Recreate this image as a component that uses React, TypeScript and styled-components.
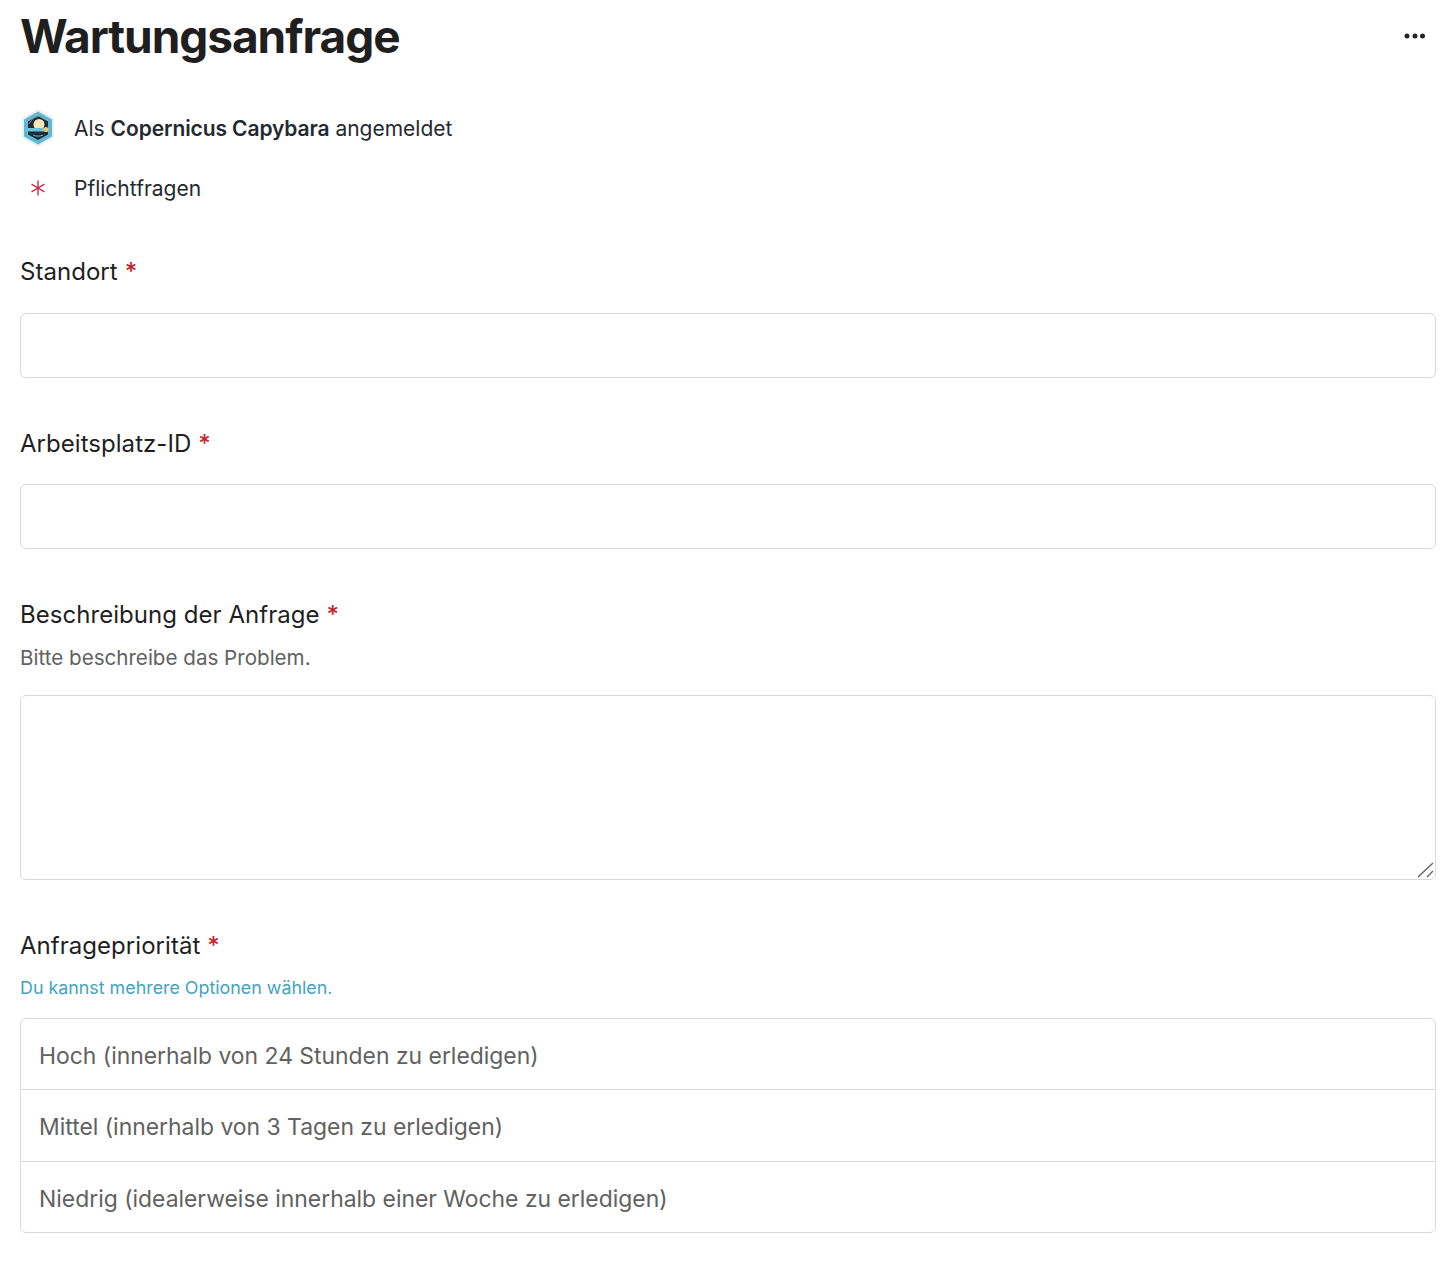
import React from "react";
import styled, { createGlobalStyle } from "styled-components";

const Global = createGlobalStyle`
  html, body { margin: 0; padding: 0; background: #fff; }
  body { font-family: Inter, "Liberation Sans", sans-serif; color: #1f1f1f; }
`;
const Page = styled.main`
  width: 1448px; height: 1264px; box-sizing: border-box; padding: 0 12px 0 20px; overflow: hidden;
`;
const Header = styled.header`
  display: flex; justify-content: space-between; height: 72px; align-items: center;
`;
const Title = styled.h1`
  margin: 0; font-size: 46px; line-height: 72px; font-weight: 700; letter-spacing: -1.05px; color: #1f1f1f;
`;
const More = styled.button`
  border: 0; background: none; padding: 0; margin-right: 10px; width: 22px; height: 22px; display: flex; align-items: center; justify-content: center;
`;
const Info = styled.div`
  display: flex; align-items: center; gap: 18px; height: 60px; font-size: 21px; color: #24292f;
`;
const InfoIcon = styled.span`
  width: 36px; display: flex; justify-content: center; align-items: center;
`;
const Bold = styled.b` font-weight: 600; letter-spacing: -0.1px; `;
const Meta = styled.div` margin-top: 26px; margin-bottom: 38px; `;
const Field = styled.section` margin-bottom: 50px; `;
const Label = styled.div<{ $gap: number }>`
  font-size: 24px; line-height: 32px; color: #1f1f1f; letter-spacing: 0.04px; margin-bottom: ${(p) => p.$gap}px;
`;
const Star = styled.span` color: #c4262e; margin-left: 7px; font-weight: 500; `;
const Hint = styled.div`
  font-size: 20.6px; line-height: 28px; color: #616161; margin-top: 13px; margin-bottom: 23px;
`;
const BlueHint = styled(Hint)` font-size: 17.85px; color: #43a3bf; margin-top: 12px; margin-bottom: 16px; `;
const Input = styled.div`
  height: 63px; border: 1px solid #d9d9d9; border-radius: 6px; background: #fff;
`;
const Area = styled(Input)`
  height: 183px; position: relative;
`;
const Grip = styled.svg`
  position: absolute; right: 1px; bottom: 1px;
`;
const Options = styled.div`
  border: 1px solid #d9d9d9; border-radius: 6px; overflow: hidden;
`;
const Option = styled.div`
  box-sizing: border-box; height: 70px; display: flex; align-items: center; padding: 4px 0 0 18px; font-size: 22.9px; color: #616161;
  & + & { border-top: 1px solid #d9d9d9; height: 72px; padding-top: 2px; }
  &:last-child { height: 71px; padding-top: 3px; }
`;

export default function App() {
  return (
    <Page>
      <Global />
      <Header>
        <Title>Wartungsanfrage</Title>
        <More aria-label="Mehr">
          <svg width="22" height="6" viewBox="0 0 22 6"><circle cx="3" cy="3" r="2.5" fill="#242424"/><circle cx="11" cy="3" r="2.5" fill="#242424"/><circle cx="18.5" cy="3" r="2.5" fill="#242424"/></svg>
        </More>
      </Header>
      <Meta>
        <Info>
          <InfoIcon>
            <svg width="36" height="38" viewBox="0 0 36 38">
              <path d="M18 0 34 9.5v19L18 38 2 28.5v-19z" fill="#e9eff2"/>
              <path d="M18 2.5 32 10.5v17L18 35.5 4 27.5v-17z" fill="#5fb8d4"/>
              <path d="M18 7 28 12.5v13L18 31 8 25.5v-13z" fill="#1e2c38"/>
              <circle cx="19" cy="15.5" r="5.5" fill="#f6e7b8"/>
              <path d="M9 15c2-5 7-8 12-7.5" stroke="#8a8a6a" strokeWidth="1" fill="none"/>
              <rect x="6" y="19" width="18" height="3.5" fill="#6cc2dc"/>
              <circle cx="26" cy="20.5" r="2.6" fill="#e3c873"/>
              <path d="M13 26c3 1.5 7 1.5 10 0" stroke="#5fb8d4" strokeWidth="1" fill="none"/>
            </svg>
          </InfoIcon>
          <span>Als <Bold>Copernicus Capybara</Bold> angemeldet</span>
        </Info>
        <Info>
          <InfoIcon>
            <svg width="16" height="16" viewBox="0 0 16 16" stroke="#c4314b" strokeWidth="1.4"><path d="M8 0.5v15M1.5 4.2l13 7.6M14.5 4.2l-13 7.6"/></svg>
          </InfoIcon>
          <span>Pflichtfragen</span>
        </Info>
      </Meta>
      <Field>
        <Label $gap={25}>Standort<Star>*</Star></Label>
        <Input />
      </Field>
      <Field>
        <Label $gap={24}>Arbeitsplatz-ID<Star>*</Star></Label>
        <Input />
      </Field>
      <Field>
        <Label $gap={0}>Beschreibung der Anfrage<Star>*</Star></Label>
        <Hint>Bitte beschreibe das Problem.</Hint>
        <Area>
          <Grip width="16" height="16" viewBox="0 0 16 16" stroke="#666" strokeWidth="1.4"><path d="M0 15 15 1M9 15l6-6"/></Grip>
        </Area>
      </Field>
      <Field>
        <Label $gap={0}>Anfragepriorität<Star>*</Star></Label>
        <BlueHint>Du kannst mehrere Optionen wählen.</BlueHint>
        <Options>
          <Option>Hoch (innerhalb von 24 Stunden zu erledigen)</Option>
          <Option>Mittel (innerhalb von 3 Tagen zu erledigen)</Option>
          <Option>Niedrig (idealerweise innerhalb einer Woche zu erledigen)</Option>
        </Options>
      </Field>
    </Page>
  );
}
